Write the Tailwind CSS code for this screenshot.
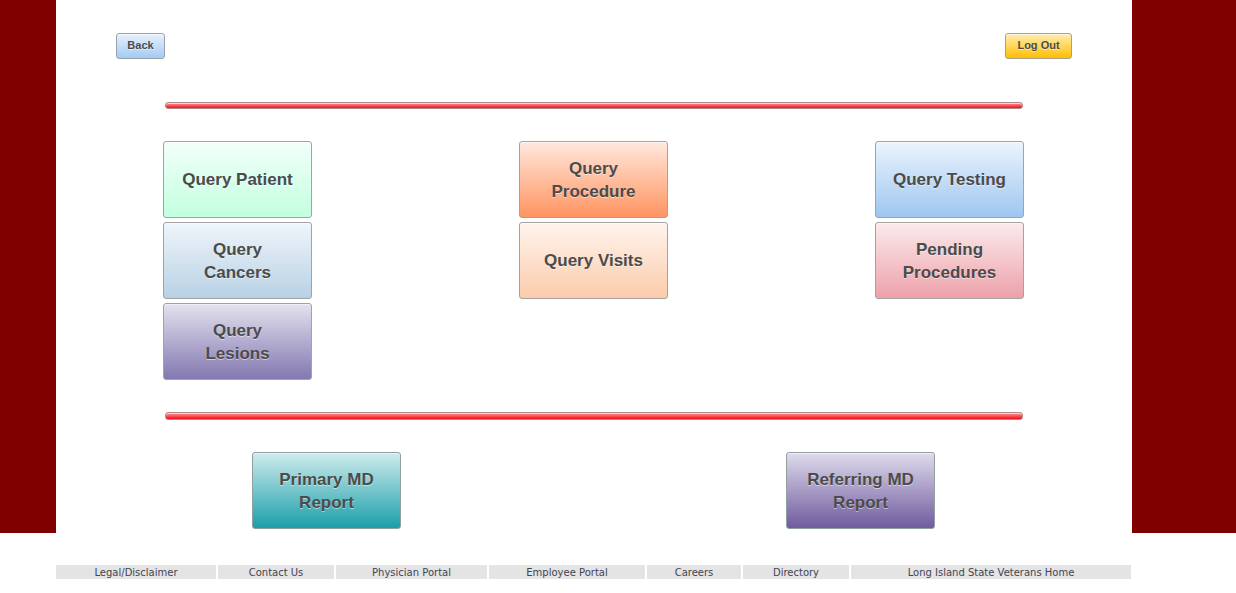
<!DOCTYPE html>
<html lang="en">
<head>
<meta charset="utf-8">
<meta name="viewport" content="width=device-width, initial-scale=1">
<title>Query Menu</title>
<script src="https://cdn.jsdelivr.net/npm/@tailwindcss/browser@4"></script>
</head>
<body class="bg-white font-['Liberation_Sans',Arial,sans-serif] text-[#4b4b4b]">
<div class="bg-[#800000] pr-[104px] pl-14">
  <main class="bg-white pt-[33px] pb-1">
    <div class="flex justify-between px-[60px] text-[11px] font-bold">
      <button class="h-[26px] w-[49px] rounded-[3px] border border-[#9aa3ad] bg-linear-to-b/srgb from-[#e6f1fc] to-[#a3cbf3] pb-px text-shadow-[0_1px_0_rgb(255_255_255/0.5)] inset-shadow-[0_1px_0_rgb(255_255_255/0.5)]">Back</button>
      <button class="h-[26px] w-[67px] rounded-[3px] border border-[#a8a28c] bg-linear-to-b/srgb from-[#ffeeb3] to-[#ffbf00] pb-px text-shadow-[0_1px_0_rgb(255_255_255/0.5)] inset-shadow-[0_1px_0_rgb(255_255_255/0.5)]">Log Out</button>
    </div>

    <hr class="mx-[109px] mt-[43px] h-[7px] rounded-[3px] border border-[#b08a8a] bg-linear-to-b/srgb from-[#ff9a9a] to-[#ee1018] inset-shadow-[0_1px_0_rgb(255_255_255/0.6)]">

    <div class="mt-8 mr-[108px] ml-[107px] flex items-start justify-between text-[17px] leading-[23px] font-bold *:flex *:flex-col *:gap-1 [&_button]:h-[77px] [&_button]:w-[149px] [&_button]:rounded-[3px] [&_button]:border [&_button]:border-[#a3a3a3] [&_button]:bg-linear-to-b/srgb [&_button]:text-shadow-[0_1px_0_rgb(255_255_255/0.5)] [&_button]:inset-shadow-[0_1px_0_rgb(255_255_255/0.5)]">
      <div>
        <button class="from-[#f2fffa] to-[#c3ffe0]">Query Patient</button>
        <button class="from-[#eff5fb] to-[#b8d1e4]">Query<br>Cancers</button>
        <button class="from-[#e3e1ee] to-[#8378b1]">Query<br>Lesions</button>
      </div>
      <div>
        <button class="from-[#ffe8de] to-[#ff9460]">Query<br>Procedure</button>
        <button class="from-[#fff4ed] to-[#fbcbab]">Query Visits</button>
      </div>
      <div>
        <button class="from-[#eaf4fd] to-[#9fc6f0]">Query Testing</button>
        <button class="from-[#fbeaeb] to-[#eda1aa]">Pending<br>Procedures</button>
      </div>
    </div>

    <hr class="mx-[109px] mt-8 h-2 rounded-[3px] border border-[#b08a8a] bg-linear-to-b/srgb from-[#ff9a9a] to-[#ee1018] inset-shadow-[0_1px_0_rgb(255_255_255/0.6)]">

    <div class="mt-8 mr-[197px] ml-[196px] flex justify-between text-[17px] leading-[23px] font-bold [&_button]:h-[77px] [&_button]:w-[149px] [&_button]:rounded-[3px] [&_button]:border [&_button]:border-[#929fa1] [&_button]:bg-linear-to-b/srgb [&_button]:text-shadow-[0_1px_0_rgb(255_255_255/0.5)] [&_button]:inset-shadow-[0_1px_0_rgb(255_255_255/0.5)]">
      <button class="from-[#cfebed] to-[#1b9faa]">Primary MD<br>Report</button>
      <button class="from-[#dfdbeb] to-[#6f5b9f]">Referring MD<br>Report</button>
    </div>
  </main>
</div>

<footer class="mt-8 mr-[105px] ml-14">
  <nav class="grid grid-cols-[160fr_116fr_151fr_156fr_94fr_106fr_280fr] gap-0.5 text-center font-['DejaVu_Sans',Verdana,sans-serif] text-[10px] whitespace-nowrap text-[#3f4553] *:bg-[#e4e4e4] *:pt-px *:leading-[13px]">
    <a href="#">Legal/Disclaimer</a>
    <a href="#">Contact Us</a>
    <a href="#">Physician Portal</a>
    <a href="#">Employee Portal</a>
    <a href="#">Careers</a>
    <a href="#">Directory</a>
    <a href="#">Long Island State Veterans Home</a>
  </nav>
</footer>
</body>
</html>
